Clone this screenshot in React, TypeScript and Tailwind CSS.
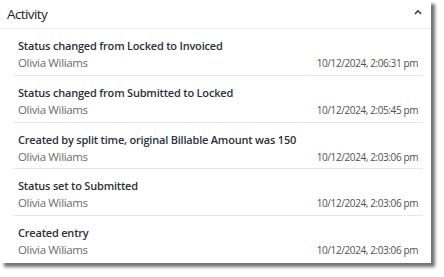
import React from "react";

const items = [
  { title: "Status changed from Locked to Invoiced", date: "10/12/2024, 2:06:31 pm" },
  { title: "Status changed from Submitted to Locked", date: "10/12/2024, 2:05:45 pm" },
  { title: "Created by split time, original Billable Amount was 150", date: "10/12/2024, 2:03:06 pm" },
  { title: "Status set to Submitted", date: "10/12/2024, 2:03:06 pm" },
  { title: "Created entry", date: "10/12/2024, 2:03:06 pm" },
];

export default function App() {
  return (
    <div className="w-[444px] h-[277px] bg-white" style={{ fontFamily: '"Open Sans", "Noto Sans", sans-serif' }}>
      <div className="w-[431px] h-[263px] bg-white shadow-[4px_4px_3px_rgba(0,0,0,0.55)] flex flex-col">
        <div className="h-[31px] flex items-center justify-between pl-[7px] pr-[9px] border-b border-[#eeeeee]">
          <span className="text-[13.5px] text-[#252525] tracking-[-0.6px]">Activity</span>
          <svg width="8" height="6" viewBox="0 0 8 6" className="mb-[4px]">
            <path d="M1 5 L4 1.8 L7 5" fill="none" stroke="#333" strokeWidth="1.5" />
          </svg>
        </div>
        <div className="flex flex-col pl-[13px] pr-[8px]">
          {items.map((it, i) => (
            <div
              key={i}
              className={`flex flex-col pl-[5px] pr-[5px] pt-[9px] pb-[3px] h-[46.8px] ${i < items.length - 1 ? "border-b border-[#e8e8e8]" : ""}`}
            >
              <div className="text-[11px] font-semibold text-[#2a313c] leading-[16px] tracking-[-0.2px]">{it.title}</div>
              <div className="flex justify-between items-center leading-[16px] mt-[1px]">
                <span className="text-[11.5px] text-[#6b6b6b] tracking-[-0.35px]">Olivia Wiliams</span>
                <span className="text-[10px] text-[#505050] tracking-[-0.4px]">{it.date}</span>
              </div>
            </div>
          ))}
        </div>
      </div>
    </div>
  );
}
